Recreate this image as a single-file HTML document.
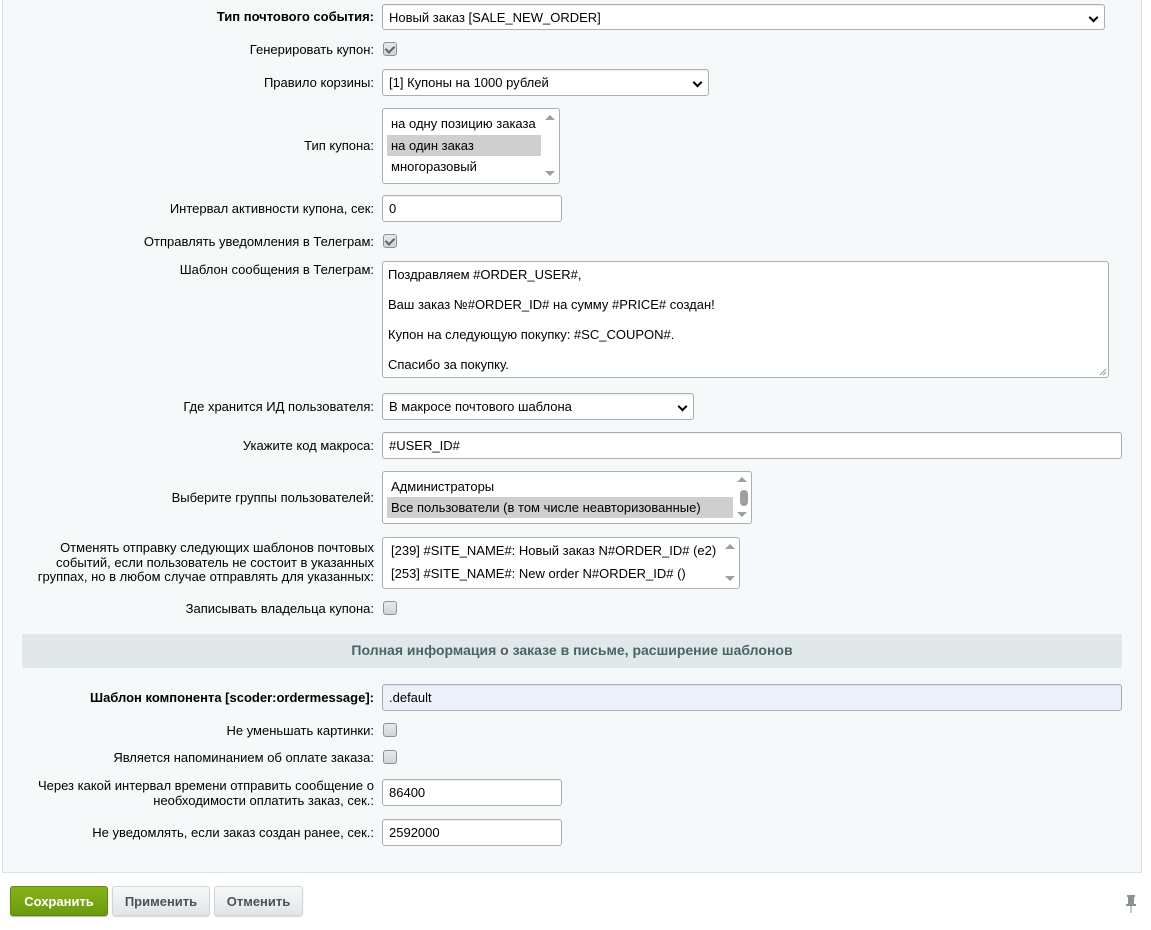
<!DOCTYPE html>
<html><head><meta charset="utf-8"><style>
*{box-sizing:border-box}
body{margin:0;width:1151px;height:930px;background:#fff;font-family:"Liberation Sans",Arial,sans-serif;font-size:13px;color:#000;position:relative;overflow:hidden}
.panel{position:absolute;left:2px;top:-2px;width:1140px;height:875px;background:#f5f9f9;border:1px solid #dce3e6;border-top:none}
.l{position:absolute;right:777px;text-align:right;line-height:15px;white-space:nowrap;color:#000}
.b{font-weight:bold}
.in{position:absolute;left:382px;background:#fff;border:1px solid #a7b0b4;border-radius:3px;padding-left:6px;line-height:25px;box-shadow:inset 0 1px 1px rgba(0,0,0,.08)}
.sel::after{content:"";position:absolute;right:7px;top:9px;width:5px;height:5px;border-right:2px solid #000;border-bottom:2px solid #000;transform:rotate(45deg)}
.cb{position:absolute;left:383px;width:14px;height:14px;border:1px solid #8c9398;border-radius:3px;background:linear-gradient(#e8eaeb,#cfd3d5)}
.cb.on::after{content:"";position:absolute;left:3px;top:1px;width:4px;height:7px;border-right:2px solid #566;border-bottom:2px solid #566;transform:rotate(45deg)}
.list{position:absolute;left:382px;background:#fff;border:1px solid #a7b0b4;border-radius:3px}
.it{position:absolute;left:4px;padding-left:4px;line-height:21px;white-space:nowrap}
.hl{background:#cfcfcf}
.up,.dn{position:absolute;right:4px;width:0;height:0;border-left:5px solid transparent;border-right:5px solid transparent}
.up{border-bottom:5px solid #a0a0a0}.dn{border-top:5px solid #a0a0a0}
.btn{position:absolute;top:886px;height:30px;border-radius:3px;font-weight:bold;text-align:center;line-height:29px;font-size:13px}
.g{background:linear-gradient(#86b319,#6b9a0e);color:#fff;border:1px solid #5f8a0b;box-shadow:0 1px 1px rgba(0,0,0,.3)}
.w{background:linear-gradient(#f7f9fa,#dfe5e8);color:#4a5358;border:1px solid #cfd6d9;box-shadow:0 1px 1px rgba(0,0,0,.15)}
</style></head><body>
<div class="panel"></div>

<div class="l b" style="top:9px">Тип почтового события:</div>
<div class="in sel" style="top:4px;width:723px;height:26px">Новый заказ [SALE_NEW_ORDER]</div>

<div class="l" style="top:42px">Генерировать купон:</div>
<div class="cb on" style="top:42px"></div>

<div class="l" style="top:75px">Правило корзины:</div>
<div class="in sel" style="top:69px;width:327px;height:27px">[1] Купоны на 1000 рублей</div>

<div class="l" style="top:138px">Тип купона:</div>
<div class="list" style="top:108px;width:178px;height:76px">
<div class="it" style="top:4px">на одну позицию заказа</div>
<div class="it hl" style="top:26px;width:154px">на один заказ</div>
<div class="it" style="top:47px">многоразовый</div>
<div class="up" style="top:6px"></div><div class="dn" style="top:62px"></div>
</div>

<div class="l" style="top:201px">Интервал активности купона, сек:</div>
<div class="in" style="top:195px;width:180px;height:27px">0</div>

<div class="l" style="top:234px">Отправлять уведомления в Телеграм:</div>
<div class="cb on" style="top:234px"></div>

<div class="l" style="top:262px">Шаблон сообщения в Телеграм:</div>
<div class="list" style="top:261px;width:727px;height:117px">
<div class="it" style="top:2px;left:1px">Поздравляем #ORDER_USER#,</div>
<div class="it" style="top:32px;left:1px">Ваш заказ №#ORDER_ID# на сумму #PRICE# создан!</div>
<div class="it" style="top:62px;left:1px">Купон на следующую покупку: #SC_COUPON#.</div>
<div class="it" style="top:92px;left:1px">Спасибо за покупку.</div>
<svg style="position:absolute;right:1px;bottom:1px" width="8" height="8"><path d="M7 1L1 7M7 4L4 7" stroke="#999" stroke-width="1"/></svg>
</div>

<div class="l" style="top:399px">Где хранится ИД пользователя:</div>
<div class="in sel" style="top:393px;width:312px;height:27px">В макросе почтового шаблона</div>

<div class="l" style="top:438px">Укажите код макроса:</div>
<div class="in" style="top:432px;width:740px;height:27px">#USER_ID#</div>

<div class="l" style="top:490px">Выберите группы пользователей:</div>
<div class="list" style="top:471px;width:370px;height:53px">
<div class="it" style="top:4px">Администраторы</div>
<div class="it hl" style="top:25px;width:346px">Все пользователи (в том числе неавторизованные)</div>
<div class="up" style="top:5px"></div><div class="dn" style="top:40px"></div>
<div style="position:absolute;right:3px;top:18px;width:8px;height:16px;border-radius:4px;background:#a0a0a0"></div>
</div>

<div class="l" style="top:541px;line-height:14.5px">Отменять отправку следующих шаблонов почтовых<br>событий, если пользователь не состоит в указанных<br>группах, но в любом случае отправлять для указанных:</div>
<div class="list" style="top:537px;width:358px;height:52px">
<div class="it" style="top:2px">[239] #SITE_NAME#: Новый заказ N#ORDER_ID# (e2)</div>
<div class="it" style="top:25px">[253] #SITE_NAME#: New order N#ORDER_ID# ()</div>
<div class="up" style="top:6px"></div><div class="dn" style="top:38px"></div>
</div>

<div class="l" style="top:601px">Записывать владельца купона:</div>
<div class="cb" style="top:601px"></div>

<div style="position:absolute;left:22px;top:634px;width:1100px;height:34px;background:#e0e8ea;text-align:center;line-height:33px;font-weight:bold;font-size:14px;color:#4b6267">Полная информация о заказе в письме, расширение шаблонов</div>

<div class="l b" style="top:690px">Шаблон компонента [scoder:ordermessage]:</div>
<div class="in" style="top:684px;width:740px;height:27px;background:#edf2fa">.default</div>

<div class="l" style="top:723px">Не уменьшать картинки:</div>
<div class="cb" style="top:723px"></div>

<div class="l" style="top:750px">Является напоминанием об оплате заказа:</div>
<div class="cb" style="top:750px"></div>

<div class="l" style="top:778px">Через какой интервал времени отправить сообщение о<br>необходимости оплатить заказ, сек.:</div>
<div class="in" style="top:779px;width:180px;height:27px">86400</div>

<div class="l" style="top:825px">Не уведомлять, если заказ создан ранее, сек.:</div>
<div class="in" style="top:819px;width:180px;height:27px">2592000</div>

<div class="btn g" style="left:10px;width:98px">Сохранить</div>
<div class="btn w" style="left:112px;width:98px">Применить</div>
<div class="btn w" style="left:214px;width:89px">Отменить</div>

<svg style="position:absolute;left:1125px;top:895px" width="12" height="18" viewBox="0 0 12 18">
<rect x="2" y="0" width="8" height="2" fill="#8a9296"/><rect x="3" y="2" width="6" height="7" fill="#8a9296"/><rect x="1" y="9" width="10" height="2" fill="#8a9296"/><rect x="5.5" y="11" width="1" height="7" fill="#8a9296"/>
</svg>
</body></html>
